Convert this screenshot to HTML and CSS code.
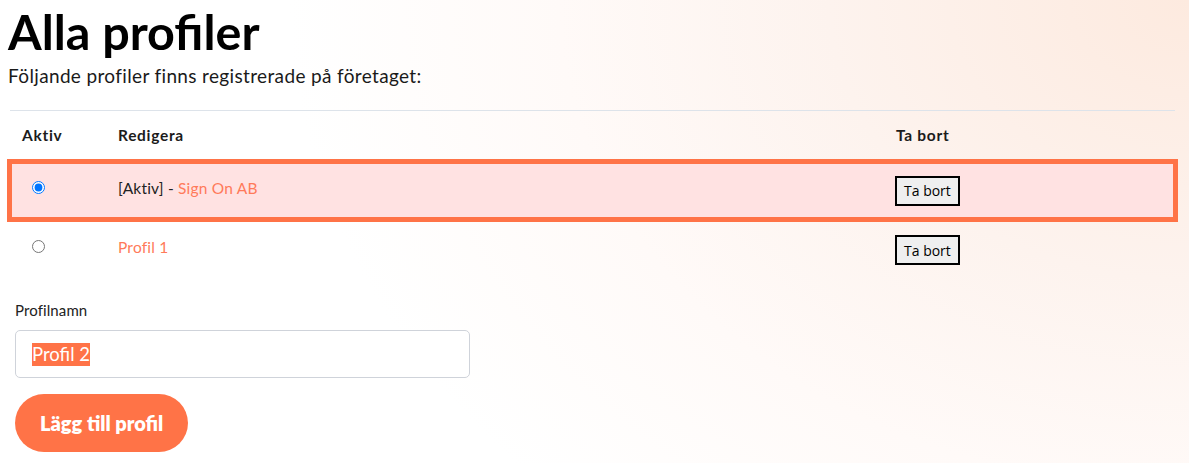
FILE: index.html
```html
<!DOCTYPE html>
<html lang="sv">
<head>
<meta charset="utf-8">
<title>Alla profiler</title>
<link rel="stylesheet" href="styles.css">
</head>
<body>
<main class="page">
  <h1 class="title">Alla profiler</h1>
  <p class="lead">Följande profiler finns registrerade på företaget:</p>

  <div class="table">
    <div class="row head">
      <div class="cell">Aktiv</div>
      <div class="cell">Redigera</div>
      <div class="cell">Ta bort</div>
    </div>
    <div class="row active">
      <div class="cell txt"><input type="radio" name="active" checked></div>
      <div class="cell txt"><span class="tag">[Aktiv] - </span><a class="link" href="#">Sign On AB</a></div>
      <div class="cell"><button class="del" type="button">Ta bort</button></div>
    </div>
    <div class="row">
      <div class="cell txt"><input type="radio" name="active"></div>
      <div class="cell txt"><a class="link" href="#">Profil 1</a></div>
      <div class="cell"><button class="del" type="button">Ta bort</button></div>
    </div>
  </div>

  <form class="form">
    <label class="label" for="name">Profilnamn</label>
    <div class="input"><span class="sel">Profil 2</span></div>
    <button class="add" type="button">Lägg till profil</button>
  </form>
</main>
</body>
</html>
```

FILE: styles.css
```css
* { box-sizing: border-box; }
html, body { height: 100%; }
body {
  margin: 0;
  font-family: "Lato", "Noto Sans", sans-serif;
  color: #111;
  background:
    radial-gradient(ellipse 900px 700px at 100% 0%, #fdeadf 0%, #fdf3ee 40%, #fffaf8 70%, #ffffff 100%);
}
.page { padding: 0 8px; }
.title {
  margin: 0;
  padding-top: 5px;
  font-size: 48.5px;
  line-height: 52px;
  font-weight: 700;
  color: #000;
}
.lead {
  margin: 8px 0 0;
  font-size: 19px;
  line-height: 22px;
  letter-spacing: 0.35px;
  color: #1a1a1a;
}
.table {
  margin: 23px 6px 0 2px;
  border-top: 1px solid #dde3ea;
}
.row {
  display: grid;
  grid-template-columns: 96px 778px 1fr;
  align-items: center;
  height: 56px;
  font-size: 15.5px;
  letter-spacing: 0.2px;
}
.row .cell { padding-left: 12px; }
.row .cell.txt { padding-bottom: 6px; }
.row.head { height: 48px; font-weight: 700; color: #1b1b1b; font-size: 15.5px; letter-spacing: 0.7px; }
.row.active {
  height: 63px;
  margin: 0 -3px 0 -3px;
  border: 5px solid #ff7347;
  background: #ffe2e2;
}
.row.active .cell { padding-left: 10px; }
input[type=radio] { margin: 0 0 2px 10px; width: 13px; height: 13px; }
.tag { color: #222; }
.link { color: #ff7a5a; text-decoration: none; }
.del {
  font-family: "Open Sans", "Noto Sans", sans-serif;
  font-size: 14px;
  letter-spacing: 0;
  color: #000;
  background: #efefef;
  border: 2px solid #000;
  padding: 0 7px;
  height: 30px;
  margin: 0 0 0 -1px;
}
.form { padding: 23px 0 0 7px; display: flex; flex-direction: column; align-items: flex-start; }
.label { font-size: 15px; color: #222; letter-spacing: 0.1px; }
.input {
  margin-top: 11px;
  width: 455px;
  height: 48px;
  border: 1px solid #cfd3da;
  border-radius: 5px;
  background: #fff;
  padding: 0 0 0 16px;
  display: flex;
  align-items: center;
}
.sel {
  background: #ff7347;
  color: #fff;
  font-size: 18.5px;
  line-height: 23px;
}
.add {
  margin-top: 16px;
  height: 58px;
  padding: 0 25px;
  border: none;
  border-radius: 29px;
  background: #ff7347;
  color: #fff;
  font-family: "Lato", sans-serif;
  font-weight: 800;
  font-size: 20px;
}
```
